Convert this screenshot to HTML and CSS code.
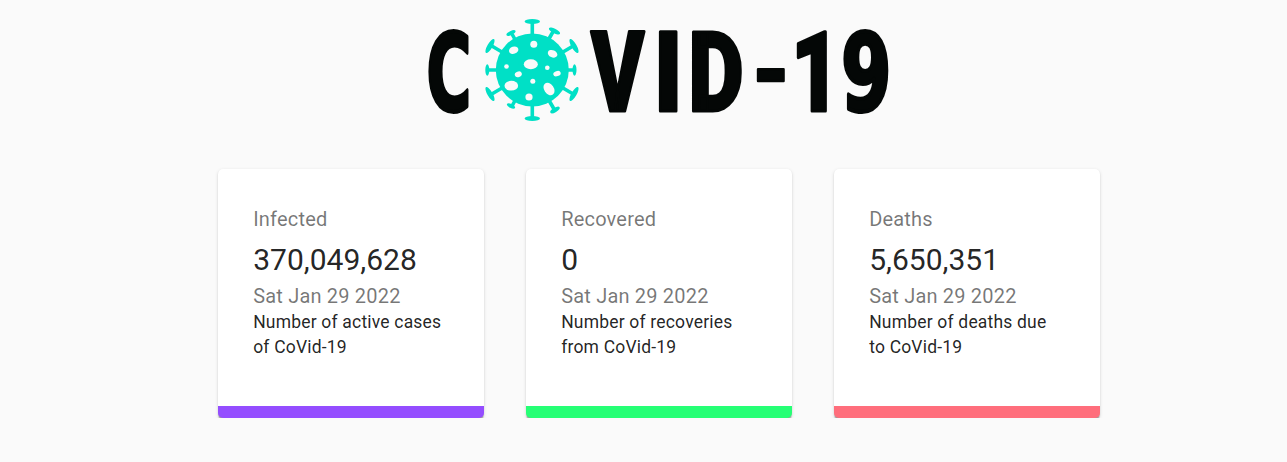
FILE: index.html
```html
<!DOCTYPE html>
<html lang="en">
<head>
<meta charset="utf-8">
<title>COVID-19 Tracker</title>
<link rel="stylesheet" href="styles.css">
</head>
<body>
<main class="container">
  <svg class="logo" viewBox="420 0 480 145" role="img" aria-label="COVID-19">
    <g class="wordmark">
      <text class="round" transform="translate(426.5 110) scale(.57 1)">C</text>
      <text transform="translate(591 111) scale(.72 1)">V</text>
      <text transform="translate(654 111) scale(.84 1)">I</text>
      <text transform="translate(688.5 111) scale(.76 1)">D</text>
      <text transform="translate(751.5 103.5) scale(.78 .83)">-</text>
      <text transform="translate(791 111) scale(.76 1)">1</text>
      <text class="round" transform="translate(841 110) scale(.68 1)">9</text>
    </g>
    <g class="virus">
      <circle cx="532.3" cy="70" r="36.5"/>
      <g class="spikes">
        <path d="M532.3 22V118M489 70H573M491 45.5L574 94.5M491 94.5L574 45.5M512 34L517 43M554 30L546 44M512 106L517 97M554 109L547 97"/>
      </g>
      <g>
        <ellipse cx="532.3" cy="21.5" rx="7.7" ry="2.6"/>
        <ellipse cx="532.3" cy="118.5" rx="7.7" ry="2.6"/>
        <ellipse cx="487.3" cy="70" rx="2" ry="5.8"/>
        <ellipse cx="574.5" cy="70" rx="2" ry="5.8"/>
        <ellipse cx="490" cy="46" rx="2.6" ry="8" transform="rotate(30 490 46)"/>
        <ellipse cx="574" cy="46" rx="2.6" ry="8" transform="rotate(-30 574 46)"/>
        <ellipse cx="490" cy="94" rx="2.6" ry="8" transform="rotate(-30 490 94)"/>
        <ellipse cx="574" cy="94" rx="2.6" ry="8" transform="rotate(30 574 94)"/>
        <ellipse cx="511" cy="33" rx="5" ry="2" transform="rotate(-27 511 33)"/>
        <ellipse cx="554.5" cy="31" rx="6.2" ry="2.3" transform="rotate(27 554.5 31)"/>
        <ellipse cx="511" cy="106" rx="4.5" ry="2" transform="rotate(27 511 106)"/>
        <ellipse cx="555" cy="110" rx="5.3" ry="2.2" transform="rotate(-30 555 110)"/>
      </g>
      <g class="spots">
        <ellipse cx="513.7" cy="50.2" rx="4.8" ry="3.6" transform="rotate(-18 513.7 50.2)"/>
        <circle cx="533.8" cy="44.2" r="3.5"/>
        <ellipse cx="552.6" cy="53.8" rx="5" ry="3.6" transform="rotate(24 552.6 53.8)"/>
        <ellipse cx="530.8" cy="64.2" rx="7" ry="5"/>
        <circle cx="506.5" cy="66.5" r="2.3"/>
        <circle cx="547.3" cy="67.7" r="2.3"/>
        <ellipse cx="518.3" cy="74.3" rx="3.6" ry="2.8" transform="rotate(-20 518.3 74.3)"/>
        <ellipse cx="557" cy="73.6" rx="3.8" ry="2.6" transform="rotate(-18 557 73.6)"/>
        <circle cx="532.8" cy="81.2" r="2.5"/>
        <ellipse cx="511.3" cy="85.7" rx="6.8" ry="4.9"/>
        <ellipse cx="549" cy="89" rx="4.8" ry="6.8" transform="rotate(-35 549 89)"/>
        <circle cx="529" cy="97" r="3.6"/>
      </g>
    </g>
  </svg>
  <section class="cards">
    <article class="card infected">
      <p class="label">Infected</p>
      <h2 class="count">370,049,628</h2>
      <p class="date">Sat Jan 29 2022</p>
      <p class="note">Number of active cases of CoVid-19</p>
    </article>
    <article class="card recovered">
      <p class="label">Recovered</p>
      <h2 class="count">0</h2>
      <p class="date">Sat Jan 29 2022</p>
      <p class="note">Number of recoveries from CoVid-19</p>
    </article>
    <article class="card deaths">
      <p class="label">Deaths</p>
      <h2 class="count">5,650,351</h2>
      <p class="date">Sat Jan 29 2022</p>
      <p class="note">Number of deaths due to CoVid-19</p>
    </article>
  </section>
</main>
</body>
</html>
```
FILE: styles.css
```css
* { box-sizing: border-box; }
body { margin: 0; background: #fafafa; font-family: Roboto, "Liberation Sans", sans-serif; }
.container { display: flex; flex-direction: column; align-items: center; padding-left: 31px; }
.logo { display: block; width: 480px; height: 145px; margin-left: 2px; overflow: visible; }
.wordmark { font: 900 112px Roboto, sans-serif; fill: #040706; stroke: #040706; stroke-width: 3px; stroke-linejoin: round; }
.round { font-family: "DejaVu Sans", sans-serif; font-size: 107px; stroke-width: 4px; }
.virus { fill: #00e0c6; }
.spikes { fill: none; stroke: #00e0c6; stroke-width: 3.6px; }
.spots { fill: #fafafa; }
.cards { display: flex; gap: 42px; margin-top: 24px; }
.card {
  width: 266px;
  height: 249px;
  padding: 35px 35px 35px 35.2px;
  background: #fff;
  border-bottom: 12px solid;
  border-radius: 5px;
  box-shadow: 0 2.5px 1.25px -1.25px rgba(0,0,0,.2), 0 1.25px 1.25px rgba(0,0,0,.14), 0 1.25px 3.75px rgba(0,0,0,.12);
}
.infected { border-bottom-color: #944dff; }
.recovered { border-bottom-color: #26ff75; }
.deaths { border-bottom-color: #ff6e7c; }
.card p, .card h2 { margin: 0; font-weight: 400; }
.label, .date { font-size: 20px; line-height: 30px; letter-spacing: .00938em; color: rgba(0,0,0,.54); }
.card .label { margin-bottom: 6px; }
.card .count { margin-bottom: 1px; font-size: 30px; line-height: 40px; color: rgba(0,0,0,.87); }
.card .note { margin-top: -1px; font-size: 17.5px; line-height: 25px; letter-spacing: .01071em; color: rgba(0,0,0,.87); }
```
